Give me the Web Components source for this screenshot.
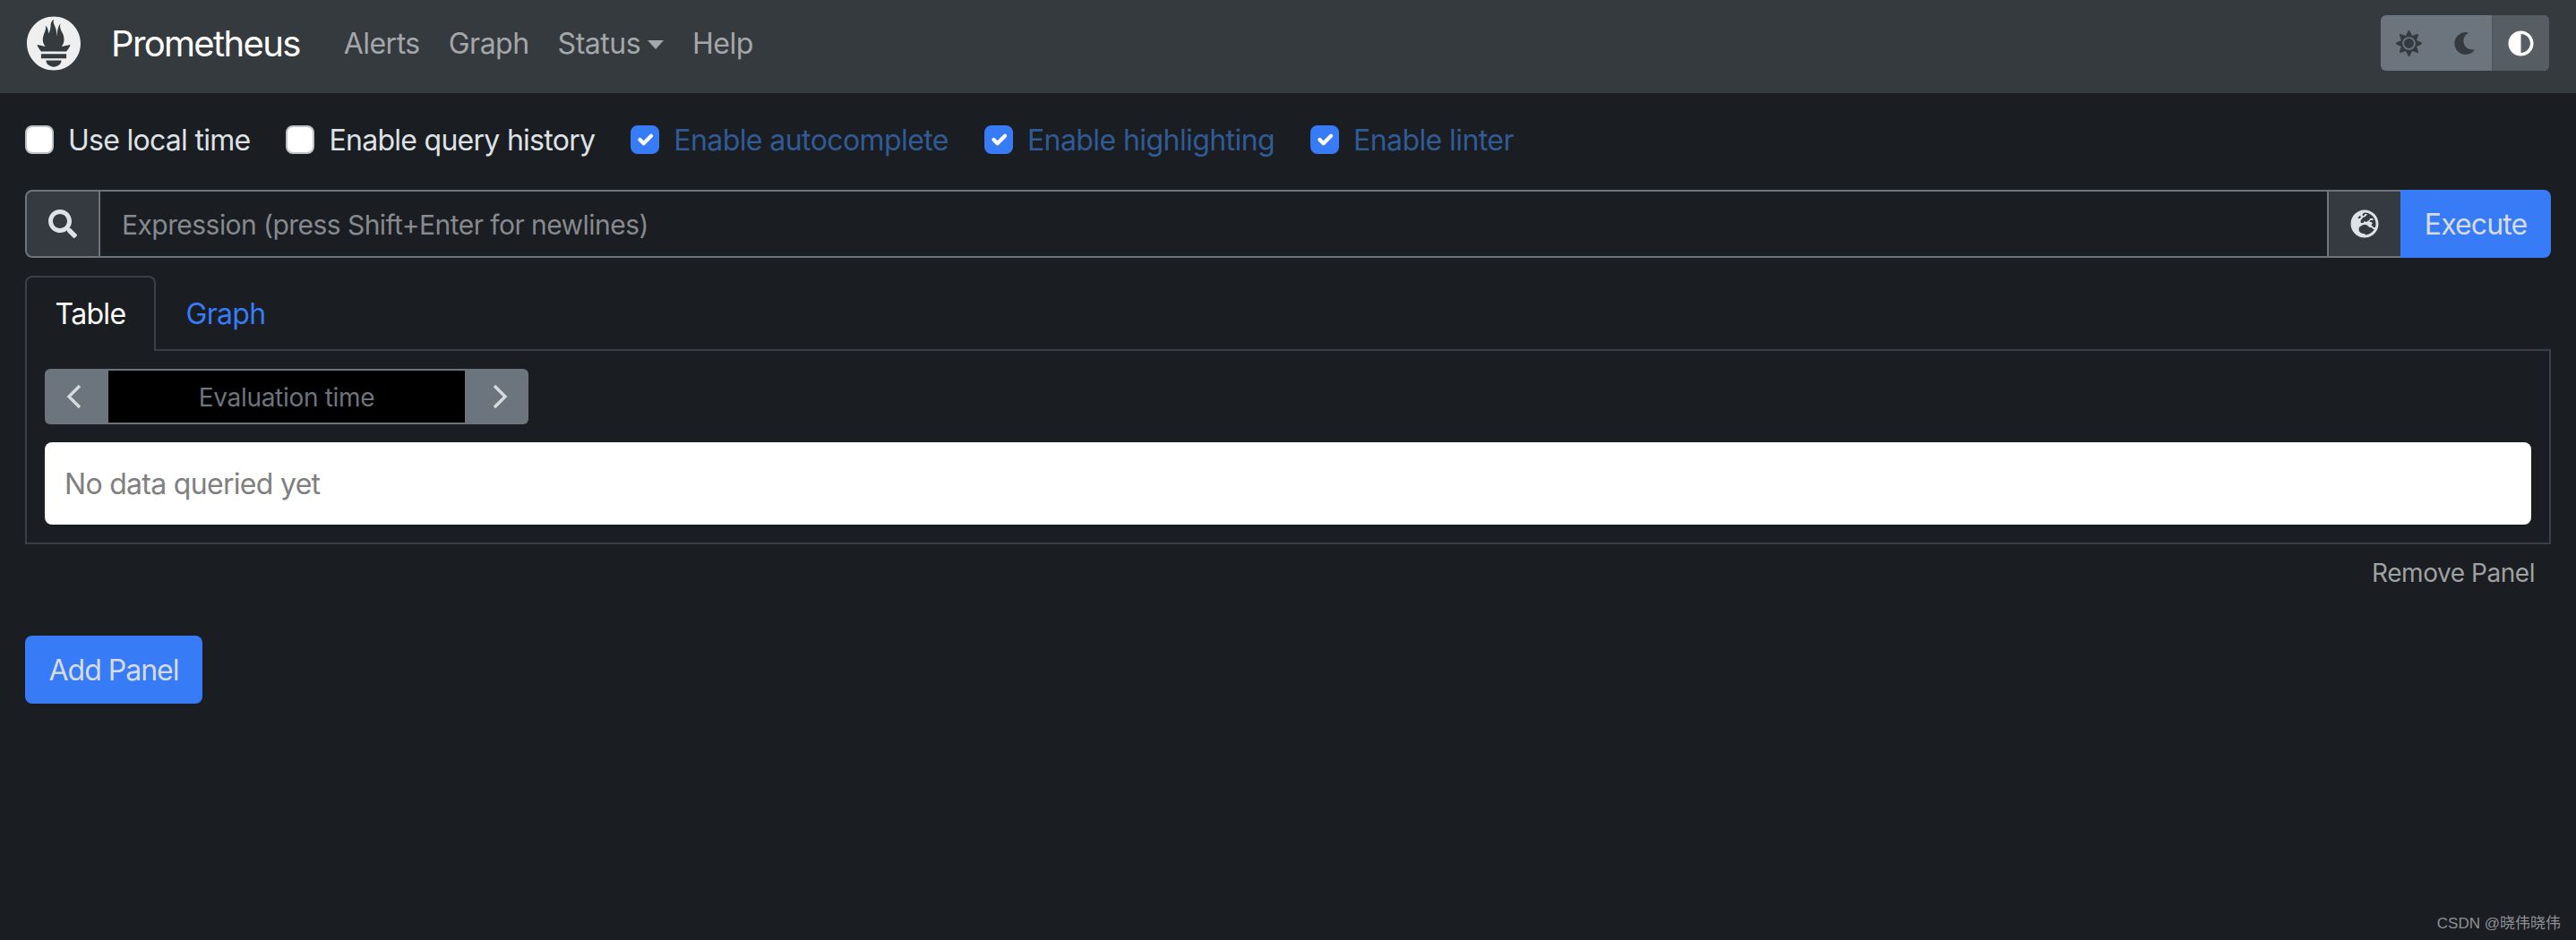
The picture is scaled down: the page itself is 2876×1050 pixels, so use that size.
<!DOCTYPE html>
<html>
<head>
<meta charset="utf-8">
<title>Prometheus</title>
<style>
  html, body { margin: 0; height: 100%; background: #1a1d21; }
  body { font-family: Inter, "Liberation Sans", sans-serif; font-size: 32px; color: #dee2e6; }
</style>
</head>
<body>
<prom-navbar></prom-navbar>
<prom-page>
  <query-options>
    <option-check>Use local time</option-check>
    <option-check>Enable query history</option-check>
    <option-check checked>Enable autocomplete</option-check>
    <option-check checked>Enable highlighting</option-check>
    <option-check checked>Enable linter</option-check>
  </query-options>
  <expression-bar></expression-bar>
  <query-panel></query-panel>
  <add-panel></add-panel>
</prom-page>
<page-mark></page-mark>

<script>
// icon paths, all on a 512 box unless the viewBox says so
const ICONS = {
  search: '<svg viewBox="0 0 512 512"><path d="M505 442.7L405.3 343c-4.5-4.5-10.6-7-17-7H372c27.6-35.3 44-79.7 44-128C416 93.1 322.9 0 208 0S0 93.1 0 208s93.1 208 208 208c48.3 0 92.7-16.4 128-44v16.3c0 6.4 2.5 12.5 7 17l99.7 99.7c9.4 9.4 24.6 9.4 33.9 0l28.3-28.3c9.4-9.4 9.4-24.6.1-34zM208 336c-70.7 0-128-57.2-128-128 0-70.7 57.2-128 128-128 70.7 0 128 57.2 128 128 0 70.7-57.2 128-128 128z"/></svg>',
  sun: '<svg viewBox="0 0 512 512"><path d="M256 160c-52.9 0-96 43.1-96 96s43.1 96 96 96 96-43.1 96-96-43.1-96-96-96zm246.4 80.5l-94.7-47.3 33.5-100.4c4.5-13.6-8.4-26.5-21.9-21.9l-100.4 33.5-47.4-94.8c-6.4-12.8-24.6-12.8-31 0l-47.3 94.7L92.7 70.8c-13.6-4.5-26.5 8.4-21.9 21.9l33.5 100.4-94.7 47.4c-12.8 6.4-12.8 24.6 0 31l94.7 47.3-33.5 100.5c-4.5 13.6 8.4 26.5 21.9 21.9l100.4-33.5 47.3 94.7c6.4 12.8 24.6 12.8 31 0l47.3-94.7 100.4 33.5c13.6 4.5 26.5-8.4 21.9-21.9l-33.5-100.4 94.7-47.3c13-6.5 13-24.7.2-31.1zm-155.9 106c-49.9 49.9-131.1 49.9-181 0-49.9-49.9-49.9-131.1 0-181 49.9-49.9 131.1-49.9 181 0 49.9 49.9 49.9 131.1 0 181z"/></svg>',
  moon: '<svg viewBox="0 0 512 512"><path d="M283.211 512c78.962 0 151.079-35.925 198.857-94.792 7.068-8.708-.639-21.43-11.562-19.35-124.203 23.654-238.262-71.576-238.262-196.954 0-72.222 38.662-138.635 101.498-174.394 9.686-5.512 7.25-20.197-3.756-22.23A258.156 258.156 0 0 0 283.211 0c-141.309 0-256 114.511-256 256 0 141.309 114.511 256 256 256z"/></svg>',
  adjust: '<svg viewBox="0 0 512 512"><path d="M8 256c0 136.966 111.033 248 248 248s248-111.034 248-248S392.966 8 256 8 8 119.033 8 256zm248 184V72c101.705 0 184 82.311 184 184 0 101.705-82.311 184-184 184z"/></svg>',
  globe: '<svg viewBox="0 0 496 512"><path d="M248 8C111 8 0 119 0 256s111 248 248 248 248-111 248-248S385 8 248 8zm200 248c0 22.5-3.9 44.2-10.8 64.4h-20.3c-4.3 0-8.4-1.7-11.4-4.8l-32-32.6c-4.5-4.6-4.5-12.1.1-16.7l12.5-12.5v-8.7c0-3-1.2-5.9-3.3-8l-9.4-9.4c-2.1-2.1-5-3.3-8-3.3h-16c-6.2 0-11.3-5.1-11.3-11.3 0-3 1.2-5.9 3.3-8l9.4-9.4c2.1-2.1 5-3.3 8-3.3h32c6.2 0 11.3-5.1 11.3-11.3v-9.4c0-6.2-5.1-11.3-11.3-11.3h-36.7c-8.8 0-16 7.2-16 16v4.5c0 6.9-4.4 13-10.9 15.2l-31.6 10.5c-3.3 1.1-5.5 4.1-5.5 7.6v2.2c0 4.4-3.6 8-8 8h-16c-4.4 0-8-3.6-8-8s-3.6-8-8-8H247c-3 0-5.8 1.7-7.2 4.4l-9.4 18.7c-2.7 5.4-8.2 8.8-14.3 8.8H194c-8.8 0-16-7.2-16-16V199c0-4.2 1.7-8.3 4.7-11.3l20.1-20.1c4.6-4.6 7.2-10.9 7.2-17.5 0-3.4 2.2-6.5 5.5-7.6l40-13.3c1.7-.6 3.2-1.5 4.4-2.7l26.8-26.8c2.1-2.1 3.3-5 3.3-8 0-6.2-5.1-11.3-11.3-11.3H258l-16 16v8c0 4.4-3.6 8-8 8h-16c-4.4 0-8-3.6-8-8v-20c0-2.5 1.2-4.9 3.2-6.4l28.9-21.7c1.9-.1 3.8-.3 5.7-.3C358.3 56 448 145.7 448 256zM130.1 149.1c0-3 1.2-5.9 3.3-8l25.4-25.4c2.1-2.1 5-3.3 8-3.3 6.2 0 11.3 5.1 11.3 11.3v16c0 3-1.2 5.9-3.3 8l-9.4 9.4c-2.1 2.1-5 3.3-8 3.3h-16c-6.2 0-11.3-5.1-11.3-11.3zm128 306.4v-7.1c0-8.8-7.2-16-16-16h-20.2c-10.8 0-26.7-5.3-35.4-11.8l-22.2-16.7c-11.5-8.6-18.2-22.1-18.2-36.4v-23.9c0-16 8.4-30.8 22.1-39l42.9-25.7c7.1-4.2 15.2-6.5 23.4-6.5h31.2c10.9 0 21.4 3.9 29.6 10.9l43.2 37.1h18.3c8.5 0 16.6 3.4 22.6 9.4l17.3 17.3c3.4 3.4 8.1 5.3 12.9 5.3H423c-32.4 58.9-93.8 99.5-164.9 103.1z"/></svg>',
  logo: '<svg viewBox="0 0 113.333 114.665"><path fill-rule="evenodd" d="M56.667,0.667C25.372,0.667,0,26.036,0,57.332c0,31.295,25.372,56.666,56.667,56.666s56.666-25.371,56.666-56.666C113.333,26.036,87.961,0.667,56.667,0.667z M56.667,106.722c-8.904,0-16.123-5.948-16.123-13.283H72.79C72.79,100.773,65.571,106.722,56.667,106.722z M83.297,89.04H30.034v-9.658h53.264V89.04z M83.106,74.411H30.186c-0.176-0.203-0.356-0.403-0.526-0.609c-5.452-6.62-6.736-10.076-7.983-13.598c-0.021-0.116,6.611,1.355,11.314,2.413c0,0,2.42,0.56,5.958,1.205c-3.397-3.982-5.414-9.044-5.414-14.218c0-11.359,8.712-21.285,5.569-29.308c3.059,0.249,6.331,6.456,6.552,16.161c3.252-4.494,4.613-12.701,4.613-17.733c0-5.21,3.433-11.262,6.867-11.469c-3.061,5.045,0.793,9.37,4.219,20.099c1.285,4.03,1.121,10.812,2.113,15.113C63.797,33.534,65.333,20.5,71,16c-2.5,5.667,0.37,12.758,2.333,16.167c3.167,5.5,5.087,9.667,5.087,17.548c0,5.284-1.951,10.259-5.242,14.148c3.742-0.702,6.326-1.335,6.326-1.335l12.152-2.371C91.657,60.156,89.891,67.418,83.106,74.411z"/></svg>'
};

class PromNavbar extends HTMLElement {
  constructor() {
    super();
    this.attachShadow({ mode: 'open' });
  }
  connectedCallback() {
    this.shadowRoot.innerHTML = `
    <style>
      :host { display: flex; align-items: center; height: 104px; background: #353a3f; padding: 0 30px 8px; box-sizing: border-box; }
      .logo { width: 60px; height: 60px; display: block; fill: #efefef; }
      .logo svg { width: 60px; height: 61px; display: block; }
      .brand { font-size: 40px; color: #fff; margin: 0 49px 0 34px; letter-spacing: -1.65px; }
      nav { display: flex; gap: 32px; font-size: 32px; color: #a4a7a9; letter-spacing: -.5px; }
      .caret { display: inline-block; width: 0; height: 0; margin-left: 8px; vertical-align: 5px;
        border-top: 10px solid #a4a7a9; border-left: 9px solid transparent; border-right: 9px solid transparent; }
      theme-toggle { margin-left: auto; }
    </style>
    <span class="logo">${ICONS.logo}</span>
    <span class="brand">Prometheus</span>
    <nav><span>Alerts</span><span>Graph</span><span>Status<i class="caret"></i></span><span>Help</span></nav>
    <theme-toggle></theme-toggle>`;
  }
}

class ThemeToggle extends HTMLElement {
  constructor() {
    super();
    this.attachShadow({ mode: 'open' });
  }
  connectedCallback() {
    this.shadowRoot.innerHTML = `
    <style>
      :host { display: flex; height: 62px; border-radius: 6px; overflow: hidden; background: #6c757d; fill: #343a40; }
      span { display: flex; align-items: center; justify-content: center; height: 100%; }
      svg { display: block; }
      .a { width: 62px; } .a svg { width: 29px; height: 29px; }
      .b { width: 62px; } .b svg { width: 25px; height: 25px; }
      .c { width: 64px; background: #565e64; fill: #fff; border-left: 2px solid #51585e; box-sizing: border-box; padding-right: 2px; }
      .c svg { width: 29px; height: 29px; }
    </style>
    <span class="a">${ICONS.sun}</span><span class="b">${ICONS.moon}</span><span class="c">${ICONS.adjust}</span>`;
  }
}

class PromPage extends HTMLElement {
  constructor() {
    super();
    this.attachShadow({ mode: 'open' }).innerHTML = `
    <style>
      :host { display: block; padding: 0 28px; }
    </style>
    <slot></slot>`;
  }
}

class QueryOptions extends HTMLElement {
  constructor() {
    super();
    this.attachShadow({ mode: 'open' }).innerHTML = `
    <style>
      :host { display: flex; align-items: center; gap: 40px; height: 104px; margin-bottom: 4px; letter-spacing: -.72px; }
    </style>
    <slot></slot>`;
  }
}

class OptionCheck extends HTMLElement {
  constructor() {
    super();
    this.attachShadow({ mode: 'open' });
  }
  connectedCallback() {
    const checked = this.hasAttribute('checked');
    this.shadowRoot.innerHTML = `
    <style>
      :host { display: flex; align-items: center; gap: 16px; color: ${checked ? '#315b94' : '#dee2e6'}; letter-spacing: ${checked ? '-.58px' : '-.72px'}; }
      .box { width: 32px; height: 32px; border-radius: 8px; box-sizing: border-box; display: block;
        background: ${checked ? '#377cf6' : '#fff'}; border: 2px solid ${checked ? '#377cf6' : '#bfc2c6'}; }
      svg { width: 28px; height: 28px; display: block; }
    </style>
    <span class="box">${checked ? '<svg viewBox="0 0 20 20"><path fill="none" stroke="#fff" stroke-linecap="round" stroke-linejoin="round" stroke-width="3" d="M6 10l3 3l6-6"/></svg>' : ''}</span>
    <slot></slot>`;
  }
}

class ExpressionBar extends HTMLElement {
  constructor() {
    super();
    this.attachShadow({ mode: 'open' });
  }
  connectedCallback() {
    this.shadowRoot.innerHTML = `
    <style>
      :host { display: flex; height: 76px; letter-spacing: -.55px; }
      .addon { display: flex; align-items: center; justify-content: center; background: #343a40;
        border: 2px solid #6c757d; box-sizing: border-box; fill: #dee2e6; }
      .search { width: 84px; border-radius: 8px 0 0 8px; }
      .search svg { width: 32px; height: 32px; }
      .globe { width: 80px; border-left: 0; border-right: 0; }
      .globe svg { width: 32px; height: 32px; }
      .field { flex: 1; border: 2px solid #6c757d; border-left: 0; box-sizing: border-box; display: flex; align-items: center;
        padding: 2px 0 0 24px; color: #868a8f; font-size: 30px; }
      .exec { width: 168px; background: #377cf6; color: #d5dbe3; border-radius: 0 8px 8px 0; letter-spacing: -.9px;
        display: flex; align-items: center; justify-content: center; }
      svg { display: block; }
    </style>
    <span class="addon search">${ICONS.search}</span>
    <span class="field">Expression (press Shift+Enter for newlines)</span>
    <span class="addon globe">${ICONS.globe}</span>
    <span class="exec">Execute</span>`;
  }
}

class QueryPanel extends HTMLElement {
  constructor() {
    super();
    this.attachShadow({ mode: 'open' });
  }
  connectedCallback() {
    this.shadowRoot.innerHTML = `
    <style>
      :host { display: block; margin-top: 20px; letter-spacing: -.7px; }
      .tabs { display: flex; height: 84px; border-bottom: 2px solid #3b4046; box-sizing: border-box; }
      .tab { width: 146px; height: 84px; box-sizing: border-box; display: flex; align-items: center; justify-content: center;
        padding-bottom: 2px; color: #fff; border: 2px solid #3b4046; border-bottom: 0; border-radius: 8px 8px 0 0; background: #1a1d21; }
      .link { width: 156px; display: flex; align-items: center; justify-content: center; color: #377cf6; padding-top: 2px; box-sizing: border-box; }
      .body { border: 2px solid #3b4046; border-top: 0; padding: 20px 20px 20px; }
      .time { display: flex; width: 540px; height: 62px; font-size: 28px; }
      .btn { width: 71px; background: #6c757d; display: flex; align-items: center; justify-content: center; }
      .btn svg { width: 20px; height: 28px; display: block; fill: none; stroke: #d8dbde; stroke-width: 3.4; }
      .btn.l { border-radius: 6px 0 0 6px; padding-right: 4px; box-sizing: border-box; }
      .btn.r { border-radius: 0 6px 6px 0; padding-left: 4px; box-sizing: border-box; }
      .val { flex: 1; background: #000; border: 2px solid #6c757d; border-left: 0; border-right: 0; box-sizing: border-box;
        display: flex; align-items: center; justify-content: center; padding-top: 2px; color: #6c757d; letter-spacing: -.3px; }
      .alert { margin-top: 20px; height: 92px; background: #fff; border-radius: 8px; display: flex; align-items: center;
        padding-left: 22px; color: #808080; }
      .foot { display: flex; justify-content: flex-end; padding: 15px 18px 0 0; font-size: 28px; color: #a0a1a2; height: 66px; box-sizing: border-box; letter-spacing: -.45px; }
    </style>
    <div class="tabs"><span class="tab">Table</span><span class="link">Graph</span></div>
    <div class="body">
      <div class="time">
        <span class="btn l"><svg viewBox="0 0 20 28"><path d="M15 2L3 14l12 12"/></svg></span>
        <span class="val">Evaluation time</span>
        <span class="btn r"><svg viewBox="0 0 20 28"><path d="M5 2l12 12L5 26"/></svg></span>
      </div>
      <div class="alert">No data queried yet</div>
    </div>
    <div class="foot">Remove Panel</div>`;
  }
}

class AddPanel extends HTMLElement {
  constructor() {
    super();
    this.attachShadow({ mode: 'open' }).innerHTML = `
    <style>
      :host { display: flex; width: 198px; height: 76px; margin-top: 36px; align-items: center; justify-content: center;
        background: #377cf6; color: #d5dbe3; border-radius: 8px; letter-spacing: -1px; }
    </style>
    <slot>Add Panel</slot>`;
  }
}

class PageMark extends HTMLElement {
  constructor() {
    super();
    this.attachShadow({ mode: 'open' }).innerHTML = `
    <style>
      :host { position: absolute; right: 17px; bottom: 8px; font: 17px "Liberation Sans", "Noto Sans CJK SC", sans-serif; color: #8f9194; }
    </style>
    <span>CSDN @晓伟晓伟</span>`;
  }
}

customElements.define('prom-navbar', PromNavbar);
customElements.define('theme-toggle', ThemeToggle);
customElements.define('prom-page', PromPage);
customElements.define('query-options', QueryOptions);
customElements.define('option-check', OptionCheck);
customElements.define('expression-bar', ExpressionBar);
customElements.define('query-panel', QueryPanel);
customElements.define('add-panel', AddPanel);
customElements.define('page-mark', PageMark);
</script>
</body>
</html>
